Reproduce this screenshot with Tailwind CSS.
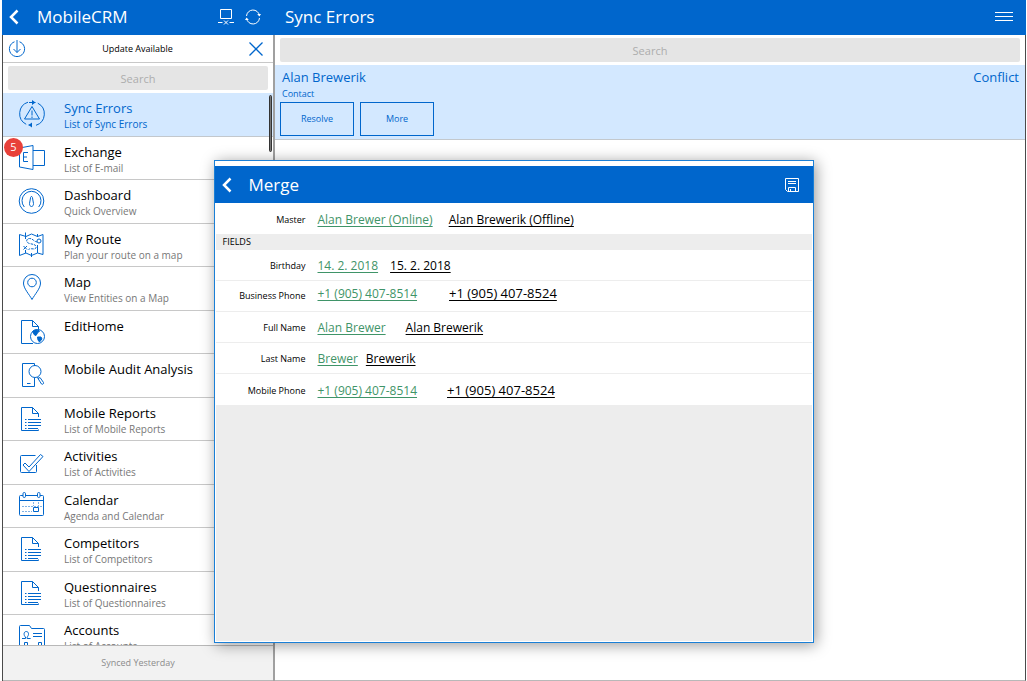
<!DOCTYPE html>
<html lang="en">
<head>
<meta charset="utf-8">
<meta name="viewport" content="width=device-width, initial-scale=1">
<title>MobileCRM - Sync Errors</title>
<script src="https://cdn.jsdelivr.net/npm/@tailwindcss/browser@4"></script>
</head>
<body class="h-screen bg-white font-['Open_Sans','Noto_Sans',sans-serif] text-black">

<svg class="hidden" aria-hidden="true">
  <symbol id="chevron" viewBox="0 0 10 16"><path d="M8.500 1.500 2 8l6.500 6.500" fill="none" stroke="currentColor" stroke-width="2.500"/></symbol>
  <symbol id="doc" viewBox="0 0 28 28" fill="none" stroke="currentColor">
    <path d="M20.500 12V8.500L14.500 2.500H3.500v23h17V24.500M14.500 2.500v6h6"/>
    <path d="M10 14.500h13M10 17.500h13M10 20.500h13M10 23.500h10M7 14.500h1.500M7 17.500h1.500M7 20.500h1.500M7 23.500h1.500"/>
  </symbol>
</svg>

<div class="flex h-full flex-col pl-0.5">
  <div class="flex min-h-0 flex-1">

    <aside class="flex w-[273px] shrink-0 flex-col">
      <header class="flex h-[35px] shrink-0 items-center bg-[#0066cc] pr-[14px] pb-0.5 pl-[7px] text-white">
        <button aria-label="Back" class="w-7"><svg class="h-4 w-2.5"><use href="#chevron"/></svg></button>
        <h1 class="flex-1 text-[17px] leading-6">MobileCRM</h1>
        <button aria-label="Connection" class="mr-[11px]"><svg class="block size-4" viewBox="0 0 16 16" fill="none" stroke="currentColor"><path d="M2.500 .5h11v9h-11zM0 13.500h4.500M11.500 13.500H16M6 11.500l4 4M10 11.500l-4 4"/></svg></button>
        <button aria-label="Sync"><svg class="block size-4" viewBox="0 0 16 16" fill="none" stroke="currentColor"><path d="M1.500 7a6.500 6.500 0 0 1 12.900-.5M14.500 9a6.500 6.500 0 0 1-12.900.5"/><path d="M12.200 5l2.200 2.500L16 5zM0 11l1.600-2.500L3.800 11z" fill="currentColor" stroke="none"/></svg></button>
      </header>

      <div class="flex min-h-0 flex-1 flex-col border-r-2 border-l border-r-[#a0a0a0] border-l-[#4a4a4a]">
        <div class="flex h-7 shrink-0 items-center border-b border-[#c8c8c8] px-[5px] text-[#0066cc]">
          <svg class="size-[18px]" viewBox="0 0 18 18" fill="none" stroke="currentColor"><path d="M6.500 1.800a7.600 7.600 0 1 0 5 0M9 0v12.500M5.500 9 9 12.500 12.500 9"/></svg>
          <p class="flex-1 text-center text-[9px] text-black">Update Available</p>
          <button aria-label="Dismiss" class="mr-[5px]"><svg class="block size-[14px]" viewBox="0 0 14 14" fill="none" stroke="currentColor" stroke-width="1.300"><path d="m.5.5 13 13M13.500.5l-13 13"/></svg></button>
        </div>
        <div class="shrink-0 px-[5px] pt-[3px] pb-[3px]">
          <input type="text" aria-label="Search menu" placeholder="Search" class="block h-6 w-full rounded-xs bg-[#e5e5e5] text-center text-[11px] placeholder:text-[#adadad]">
        </div>

        <nav class="relative min-h-0 flex-1 overflow-hidden">
          <ul>
            <li class="odd:h-11 even:h-[43px]"><a href="#" class="flex h-full border-b border-[#c3c8cd] bg-[#d3e8ff] pt-[7px] text-[#0066cc]">
              <span class="w-[61px] shrink-0 pl-[15px]"><svg class="size-7" viewBox="0 0 28 28" fill="none" stroke="currentColor"><path d="M10 2.200a12 12 0 0 0-1.800 22.100M10.500 25H14M18 25.300a12 12 0 0 0 1.800-22.100M11 2.500h6.500"/><path d="M14 0l3.500 2.500L14 5zM14 22.500 10.500 25l3.500 2.500z" fill="currentColor" stroke="none"/><path d="m14 6.500 7.500 12.500h-15zM14 10.500v5M14 16.500v1.500"/></svg></span>
              <span class="min-w-0"><span class="block text-[13px] leading-4">Sync Errors</span><span class="block text-[10px] leading-4">List of Sync Errors</span></span></a></li>
            <li class="odd:h-11 even:h-[43px]"><a href="#" class="relative flex h-full border-b border-[#c8c8c8] pt-[7px]">
              <span class="w-[61px] shrink-0 pl-[15px] text-[#0066cc]"><svg class="size-7" viewBox="0 0 28 28" fill="none" stroke="currentColor"><path d="M1.500 4 15 1.500v24L1.500 23zM15 6.500h11.500v15H15M10 8.500H5.500v9H10M5.500 13H9"/></svg></span>
              <span class="absolute top-px left-px flex size-[19px] items-center justify-center rounded-full bg-[#e8413a] text-[11px] text-white">5</span>
              <span class="min-w-0"><span class="block text-[13px] leading-4">Exchange</span><span class="block text-[10px] leading-4 text-[#777]">List of E-mail</span></span></a></li>
            <li class="odd:h-11 even:h-[43px]"><a href="#" class="flex h-full border-b border-[#c8c8c8] pt-[7px]">
              <span class="w-[61px] shrink-0 pl-[15px] text-[#0066cc]"><svg class="size-7" viewBox="0 0 28 28" fill="none" stroke="currentColor"><circle cx="13.500" cy="14" r="12.300"/><path d="M6.300 20a9.500 9.500 0 1 1 14.400 0M13.500 9.500c-.8 0-1 .8-1 1.500l-1 5.500c-.2 4 4.200 4 4 0l-1-5.500c0-.7-.2-1.500-1-1.500z"/></svg></span>
              <span class="min-w-0"><span class="block text-[13px] leading-4">Dashboard</span><span class="block text-[10px] leading-4 text-[#777]">Quick Overview</span></span></a></li>
            <li class="odd:h-11 even:h-[43px]"><a href="#" class="flex h-full border-b border-[#c8c8c8] pt-[7px]">
              <span class="w-[61px] shrink-0 pl-[15px] text-[#0066cc]"><svg class="size-7" viewBox="0 0 28 28" fill="none" stroke="currentColor"><path d="M1.500 3.500 8 5.500l5.500-2.500 6 2.500 5.500-2v20l-5.500-1.500-6 2.500L8 22l-6.500 2.500zM7.500 1.500V8M7.500 19v3M19.500 3v3M19.500 14v8M13.500 22v4M5.500 15l3.500 3.500M9 15l-3.500 3.500"/><path stroke-dasharray="2.500 1" d="M19 11c-4-1-4-3.500-7.500-3.500s-4 4 0 5 7 1 6.500 4-5 0-7.500 2"/><circle cx="21" cy="10" r="2"/></svg></span>
              <span class="min-w-0"><span class="block text-[13px] leading-4">My Route</span><span class="block text-[10px] leading-4 text-[#777]">Plan your route on a map</span></span></a></li>
            <li class="odd:h-11 even:h-[43px]"><a href="#" class="flex h-full border-b border-[#c8c8c8] pt-[7px]">
              <span class="w-[61px] shrink-0 pl-[15px] text-[#0066cc]"><svg class="size-7" viewBox="0 0 28 28" fill="none" stroke="currentColor"><path d="M14 25.500C11 20 5.500 14.500 5.500 9a8.500 8.500 0 0 1 17 0c0 5.500-5.500 11-8.500 16.500z"/><circle cx="14" cy="8.500" r="4.300"/></svg></span>
              <span class="min-w-0"><span class="block text-[13px] leading-4">Map</span><span class="block text-[10px] leading-4 text-[#777]">View Entities on a Map</span></span></a></li>
            <li class="odd:h-11 even:h-[43px]"><a href="#" class="flex h-full border-b border-[#c8c8c8] pt-[7px]">
              <span class="w-[61px] shrink-0 pl-[15px] text-[#0066cc]"><svg class="size-7" viewBox="0 0 28 28" fill="none" stroke="currentColor"><path d="M15 25.500H3.500v-23h11l6 6v3M14.500 2.500v6h6"/><circle cx="19.500" cy="18.500" r="7"/><path d="M14.500 13.500c2-2 5-2 7-.5l-2 2-1.500 2.500-1.500-.5zM19.500 19l3.500 0 1 2-2.500 3-1.500-2z" fill="currentColor"/></svg></span>
              <span class="min-w-0"><span class="block text-[13px] leading-4">EditHome</span></span></a></li>
            <li class="odd:h-11 even:h-[43px]"><a href="#" class="flex h-full border-b border-[#c8c8c8] pt-[7px]">
              <span class="w-[61px] shrink-0 pl-[15px] text-[#0066cc]"><svg class="size-7" viewBox="0 0 28 28" fill="none" stroke="currentColor"><path d="M16.500 5V2.500h-12v23h12V17M9 22.500h3.500M19.500 16l1 2"/><circle cx="17" cy="10.500" r="6"/><path d="m20 17.500 3.500 5.500a1.300 1.300 0 0 0 2-1.500L22 16.500z"/></svg></span>
              <span class="min-w-0"><span class="block text-[13px] leading-4">Mobile Audit Analysis</span></span></a></li>
            <li class="odd:h-11 even:h-[43px]"><a href="#" class="flex h-full border-b border-[#c8c8c8] pt-[7px]">
              <span class="w-[61px] shrink-0 pl-[15px] text-[#0066cc]"><svg class="size-7"><use href="#doc"/></svg></span>
              <span class="min-w-0"><span class="block text-[13px] leading-4">Mobile Reports</span><span class="block text-[10px] leading-4 text-[#777]">List of Mobile Reports</span></span></a></li>
            <li class="odd:h-11 even:h-[43px]"><a href="#" class="flex h-full border-b border-[#c8c8c8] pt-[7px]">
              <span class="w-[61px] shrink-0 pl-[15px] text-[#0066cc]"><svg class="size-7" viewBox="0 0 28 28" fill="none" stroke="currentColor"><path d="M17.500 7.500h-14a1 1 0 0 0-1 1v15a1 1 0 0 0 1 1h14a1 1 0 0 0 1-1V17"/><path d="m5 17 2-2 4 4L22.500 6.500l2.500 2L11 23.500z"/></svg></span>
              <span class="min-w-0"><span class="block text-[13px] leading-4">Activities</span><span class="block text-[10px] leading-4 text-[#777]">List of Activities</span></span></a></li>
            <li class="odd:h-11 even:h-[43px]"><a href="#" class="flex h-full border-b border-[#c8c8c8] pt-[7px]">
              <span class="w-[61px] shrink-0 pl-[15px] text-[#0066cc]"><svg class="size-7" viewBox="0 0 28 28" fill="none" stroke="currentColor"><path d="M5 3.500H2.500a1 1 0 0 0-1 1v18a1 1 0 0 0 1 1h22a1 1 0 0 0 1-1v-18a1 1 0 0 0-1-1H22M7.500 3.500h12M1.500 8.500h24"/><rect x="5" y=".5" width="2.500" height="5" rx="1.200"/><rect x="19.500" y=".5" width="2.500" height="5" rx="1.200"/><path d="M4 14.500h20M4 19.500h10M15.500 10v4M20.500 10v4" stroke-dasharray="2 1" opacity=".5"/><path d="M15.500 15.500h5v4h-5z"/></svg></span>
              <span class="min-w-0"><span class="block text-[13px] leading-4">Calendar</span><span class="block text-[10px] leading-4 text-[#777]">Agenda and Calendar</span></span></a></li>
            <li class="odd:h-11 even:h-[43px]"><a href="#" class="flex h-full border-b border-[#c8c8c8] pt-[7px]">
              <span class="w-[61px] shrink-0 pl-[15px] text-[#0066cc]"><svg class="size-7"><use href="#doc"/></svg></span>
              <span class="min-w-0"><span class="block text-[13px] leading-4">Competitors</span><span class="block text-[10px] leading-4 text-[#777]">List of Competitors</span></span></a></li>
            <li class="odd:h-11 even:h-[43px]"><a href="#" class="flex h-full border-b border-[#c8c8c8] pt-[7px]">
              <span class="w-[61px] shrink-0 pl-[15px] text-[#0066cc]"><svg class="size-7"><use href="#doc"/></svg></span>
              <span class="min-w-0"><span class="block text-[13px] leading-4">Questionnaires</span><span class="block text-[10px] leading-4 text-[#777]">List of Questionnaires</span></span></a></li>
            <li class="odd:h-11 even:h-[43px]"><a href="#" class="flex h-full border-b border-[#c8c8c8] pt-[7px]">
              <span class="w-[61px] shrink-0 pl-[15px] text-[#0066cc]"><svg class="size-7" viewBox="0 0 28 28" fill="none" stroke="currentColor"><path d="M1.500 26V4.500a1 1 0 0 1 1-1h9l2 3h12a1 1 0 0 1 1 1V26z"/><path d="M4 16.500h3.500v-1.500c-2-1.500-2-5.500.8-5.500s2.800 4 .8 5.500v1.500h3.500M15 11.500h9M15 14.500h9M6.500 24v-3.500h3V24M20.500 24v-3.500h3V24"/></svg></span>
              <span class="min-w-0"><span class="block text-[13px] leading-4">Accounts</span><span class="block text-[10px] leading-4 text-[#777]">List of Accounts</span></span></a></li>
          </ul>
          <div class="absolute top-0.5 right-px h-[57px] w-[3px] rounded-full border border-[#333] bg-[#777]"></div>
        </nav>
        <footer class="flex h-9 shrink-0 items-center justify-center border-y border-[#b8b8b8] bg-[#f2f2f2] text-[9px] text-[#8c8c8c]">Synced Yesterday</footer>
      </div>
    </aside>

    <main class="flex min-w-0 flex-1 flex-col">
      <header class="mr-px flex h-[35px] shrink-0 items-center justify-between bg-[#0066cc] pr-[13px] pb-0.5 pl-2.5 text-white">
        <h2 class="text-[17px] leading-6">Sync Errors</h2>
        <button aria-label="Menu"><svg class="block h-[9px] w-[18px]" viewBox="0 0 18 9" stroke="currentColor"><path d="M0 .5h18M0 4.500h18M0 8.500h18"/></svg></button>
      </header>
      <div class="mr-px flex-1 border-r border-b border-r-[#4a4a4a] border-b-[#b8b8b8]">
        <div class="px-[5px] pt-[3px] pb-[3px]">
          <input type="text" aria-label="Search errors" placeholder="Search" class="block h-6 w-full rounded-xs bg-[#e5e5e5] text-center text-[11px] placeholder:text-[#adadad]">
        </div>
        <article class="h-[75px] border-b border-[#c3c8cd] bg-[#d3e8ff] pt-[3px] pr-[6px] pl-[7px] text-[#0066cc]">
          <div class="flex justify-between text-[13px] leading-[18px]"><h3>Alan Brewerik</h3><p>Conflict</p></div>
          <p class="text-[9px] leading-4">Contact</p>
          <div class="-ml-0.5 flex gap-1.5">
            <button class="h-[34px] w-[74px] border border-[#0066cc] text-[9px]">Resolve</button>
            <button class="h-[34px] w-[74px] border border-[#0066cc] text-[9px]">More</button>
          </div>
        </article>
      </div>
    </main>
  </div>
</div>

<div class="pointer-events-none absolute inset-x-0 top-40 flex justify-center">
  <section role="dialog" aria-label="Merge" class="pointer-events-auto flex h-[483px] w-[600px] max-w-full flex-col border border-[#1a7fd6] bg-white pt-[5px] shadow-[2px_2px_14px_rgba(0,0,0,0.4)]">
    <header class="flex h-[37px] shrink-0 items-center bg-[#0066cc] pr-[14px] pl-[7px] text-white">
      <button aria-label="Close merge" class="w-[27px]"><svg class="h-4 w-2.5"><use href="#chevron"/></svg></button>
      <h2 class="flex-1 text-[17px] leading-6">Merge</h2>
      <button aria-label="Save"><svg class="block size-[14px]" viewBox="0 0 14 14" fill="none" stroke="currentColor"><path d="M.5.5h13v13H2.500l-2-2zM3 3.500h8M3 5.500h8M3.500 13.500v-4h7v4M5.500 11v2.500"/></svg></button>
    </header>
    <div class="flex min-h-0 flex-1 flex-col px-px pb-px text-[12px]">
      <dl class="shrink-0">
        <div class="flex h-[31px] items-center pt-0.5"><dt class="mr-3 w-[90px] text-right text-[9px] font-medium">Master</dt><dd class="flex gap-4"><a href="#" class="text-[#3f9468] underline underline-offset-2">Alan Brewer (Online)</a><a href="#" class="underline underline-offset-2">Alan Brewerik (Offline)</a></dd></div>
      </dl>
      <h3 class="h-4 shrink-0 bg-[#ededed] pl-[7px] text-[9px] leading-4 font-medium">FIELDS</h3>
      <dl class="shrink-0 divide-y divide-[#ededed]">
        <div class="flex h-[31px] items-center pt-0.5"><dt class="mr-3 w-[90px] text-right text-[9px] font-medium">Birthday</dt><dd class="flex gap-3"><a href="#" class="text-[#3f9468] underline underline-offset-2">14. 2. 2018</a><a href="#" class="underline underline-offset-2">15. 2. 2018</a></dd></div>
        <div class="flex h-[31px] items-center"><dt class="mr-3 w-[90px] text-right text-[9px] font-medium">Business Phone</dt><dd class="flex items-center gap-8 pb-1"><a href="#" class="text-[#3f9468] underline underline-offset-2">+1 (905) 407-8514</a><a href="#" class="text-[13px] underline underline-offset-2">+1 (905) 407-8524</a></dd></div>
        <div class="flex h-[31px] items-center pt-0.5"><dt class="mr-3 w-[90px] text-right text-[9px] font-medium">Full Name</dt><dd class="flex gap-5"><a href="#" class="text-[#3f9468] underline underline-offset-2">Alan Brewer</a><a href="#" class="underline underline-offset-2">Alan Brewerik</a></dd></div>
        <div class="flex h-[31px] items-center pt-0.5"><dt class="mr-3 w-[90px] text-right text-[9px] font-medium">Last Name</dt><dd class="flex gap-2"><a href="#" class="text-[#3f9468] underline underline-offset-2">Brewer</a><a href="#" class="underline underline-offset-2">Brewerik</a></dd></div>
        <div class="flex h-[31px] items-center pt-0.5"><dt class="mr-3 w-[90px] text-right text-[9px] font-medium">Mobile Phone</dt><dd class="flex items-center gap-[30px]"><a href="#" class="text-[#3f9468] underline underline-offset-2">+1 (905) 407-8514</a><a href="#" class="text-[13px] underline underline-offset-2">+1 (905) 407-8524</a></dd></div>
      </dl>
      <div class="flex-1 bg-[#ededed]"></div>
    </div>
  </section>
</div>
</body>
</html>
